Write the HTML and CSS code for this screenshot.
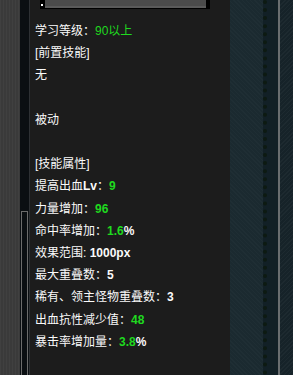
FILE: index.html
```html
<!DOCTYPE html>
<html lang="zh-CN">
<head>
    <meta charset="UTF-8">
    <meta name="viewport" content="width=device-width, initial-scale=1.0">
    <title>技能说明</title>
    <link rel="stylesheet" href="styles.css">
</head>
<body>
    <div class="frame-bg"></div>

    <div class="frame-edge">
        <div class="scroll-thumb"></div>
    </div>

    <div class="tooltip">
        <div class="top-slot"></div>

        <ul class="info-list">
            <li>学习等级：<span class="green">90以上</span></li>
            <li>[前置技能]</li>
            <li>无</li>
            <li class="blank"></li>
            <li>被动</li>
            <li class="blank"></li>
            <li>[技能属性]</li>
            <li>提高出血<b>Lv</b>：<b class="green">9</b></li>
            <li>力量增加：<b class="green">96</b></li>
            <li>命中率增加：<b class="green">1.6</b><b>%</b></li>
            <li>效果范围: <b>1000px</b></li>
            <li>最大重叠数：<b>5</b></li>
            <li>稀有、领主怪物重叠数：<b>3</b></li>
            <li>出血抗性减少值：<b class="green">48</b></li>
            <li>暴击率增加量：<b class="green">3.8</b><b>%</b></li>
            <li class="blank"></li>
            <li>[技能说明]</li>
        </ul>
    </div>

    <div class="side-panel"></div>
    <div class="side-rail"></div>
    <div class="side-line"></div>
    <div class="side-end"></div>
</body>
</html>
```

FILE: styles.css
```css
* {
    margin: 0;
    padding: 0;
    box-sizing: border-box;
}

body {
    width: 293px;
    height: 375px;
    display: flex;
    overflow: hidden;
    background: #1c1c1c;
    font-family: 'Liberation Sans', 'Noto Sans CJK SC', sans-serif;
}

/* Left game frame */
.frame-bg {
    width: 20px;
    background:
        repeating-linear-gradient(90deg, rgba(255,255,255,0.03) 0 1px, transparent 1px 3px),
        #3a3a3a;
}

.frame-edge {
    width: 10px;
    background: #0b0f12;
    border-right: 1px solid #2e3134;
    padding-top: 211px;
    padding-left: 1px;
}

.scroll-thumb {
    width: 7px;
    height: 200px;
    border: 1px solid #6c6c6c;
    border-bottom: none;
}

/* Tooltip body */
.tooltip {
    width: 200px;
    background: #1c1c1c;
    padding-left: 5px;
}

.top-slot {
    width: 170px;
    height: 10px;
    margin-left: 5px;
    margin-top: -1px;
    background: #000;
    padding: 0 4px 3px 5px;
    position: relative;
}

.top-slot::before {
    content: '';
    display: block;
    height: 100%;
    background: #4b4b4b;
    border-bottom: 2px solid #5a5a5a;
}

.top-slot::after {
    content: '';
    position: absolute;
    left: 1px;
    bottom: 3px;
    width: 2px;
    height: 2px;
    background: #fff;
}

.info-list {
    list-style: none;
    margin-top: 11px;
    font-size: 12px;
    line-height: 22.2px;
    color: #fafafa;
    white-space: nowrap;
}

.info-list b {
    font-weight: 700;
}

.info-list .blank {
    height: 22.2px;
}

.green {
    color: #1fd91f;
}

/* Right game frame */
.side-panel {
    width: 33px;
    background:
        repeating-linear-gradient(45deg, rgba(255,255,255,0.02) 0 1px, transparent 1px 3px),
        #1b2a30;
}

.side-rail {
    width: 15px;
    background: #122026;
    border-left: 4px dotted #0d1a12;
}

.side-line {
    width: 2px;
    background: #6a6e70;
}

.side-end {
    flex: 1;
    background:
        repeating-linear-gradient(-45deg, rgba(255,255,255,0.03) 0 1px, transparent 1px 3px),
        #162329;
}
```
